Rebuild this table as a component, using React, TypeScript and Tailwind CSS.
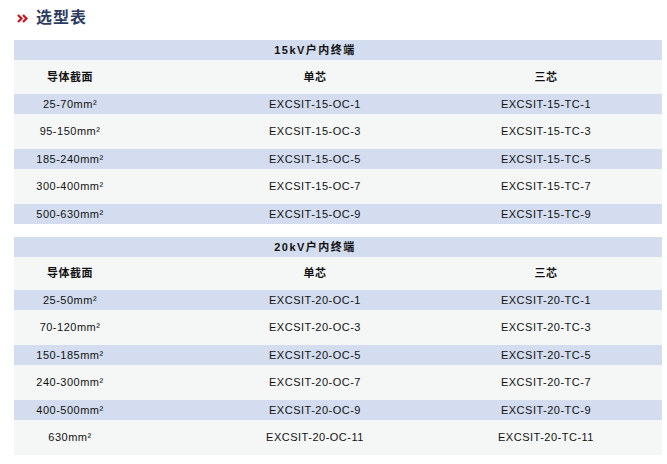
import React from "react";

const font = { fontFamily: '"Liberation Sans", Arial, "Noto Sans CJK SC", sans-serif' };

type Row = [string, string, string];

const t1: Row[] = [
  ["25-70mm²", "EXCSIT-15-OC-1", "EXCSIT-15-TC-1"],
  ["95-150mm²", "EXCSIT-15-OC-3", "EXCSIT-15-TC-3"],
  ["185-240mm²", "EXCSIT-15-OC-5", "EXCSIT-15-TC-5"],
  ["300-400mm²", "EXCSIT-15-OC-7", "EXCSIT-15-TC-7"],
  ["500-630mm²", "EXCSIT-15-OC-9", "EXCSIT-15-TC-9"],
];
const t2: Row[] = [
  ["25-50mm²", "EXCSIT-20-OC-1", "EXCSIT-20-TC-1"],
  ["70-120mm²", "EXCSIT-20-OC-3", "EXCSIT-20-TC-3"],
  ["150-185mm²", "EXCSIT-20-OC-5", "EXCSIT-20-TC-5"],
  ["240-300mm²", "EXCSIT-20-OC-7", "EXCSIT-20-TC-7"],
  ["400-500mm²", "EXCSIT-20-OC-9", "EXCSIT-20-TC-9"],
  ["630mm²", "EXCSIT-20-OC-11", "EXCSIT-20-TC-11"],
];

function Cells({ row, bold }: { row: Row; bold?: boolean }) {
  const cls = `flex items-center justify-center whitespace-nowrap ${bold ? "font-bold tracking-[0.5px]" : "tracking-[0.5px]"}`;
  return (
    <>
      <div className={cls}>{row[0]}</div>
      <div className={`${cls} pl-[74px]`}>{row[1]}</div>
      <div className={cls}>{row[2]}</div>
    </>
  );
}

function Table({ title, rows, headH }: { title: string; rows: Row[]; headH: string }) {
  return (
    <div className="ml-[14px] w-[648px] text-[11px] text-[#111111]">
      <div className="grid h-[20px] grid-cols-[112px_304px_232px] bg-[#d3ddef]">
        <div />
        <div className="flex items-center justify-center whitespace-nowrap pl-[74px] text-[11px] font-bold tracking-[1.5px]">
          {title}
        </div>
        <div />
      </div>
      <div className={`grid ${headH} grid-cols-[112px_304px_232px] bg-[#f5f7f7]`}>
        <Cells row={["导体截面", "单芯", "三芯"]} bold />
      </div>
      {rows.map((r, i) => (
        <div
          key={i}
          className={`grid grid-cols-[112px_304px_232px] ${i % 2 === 0 ? "h-[20px] bg-[#d3ddef]" : "h-[35px] bg-[#f5f7f7]"}`}
        >
          <Cells row={r} />
        </div>
      ))}
    </div>
  );
}

export default function App() {
  return (
    <div className="h-[464px] w-[667px] overflow-hidden bg-white" style={font}>
      <div className="flex h-[40px] items-center pb-[4px] pl-[17px]">
        <svg width="11" height="9" viewBox="0 0 11 9" className="mr-[8px]">
          <path d="M1 1 L4.5 4.5 L1 8" fill="none" stroke="#d0121b" strokeWidth="2.2" strokeLinejoin="miter" />
          <path d="M6 1 L9.5 4.5 L6 8" fill="none" stroke="#d0121b" strokeWidth="2.2" strokeLinejoin="miter" />
        </svg>
        <span className="text-[16px] font-bold tracking-[1px] text-[#2f3c62]">选型表</span>
      </div>
      <Table title="15kV户内终端" rows={t1} headH="h-[34px]" />
      <div className="h-[13px]" />
      <Table title="20kV户内终端" rows={t2} headH="h-[33px]" />
    </div>
  );
}
